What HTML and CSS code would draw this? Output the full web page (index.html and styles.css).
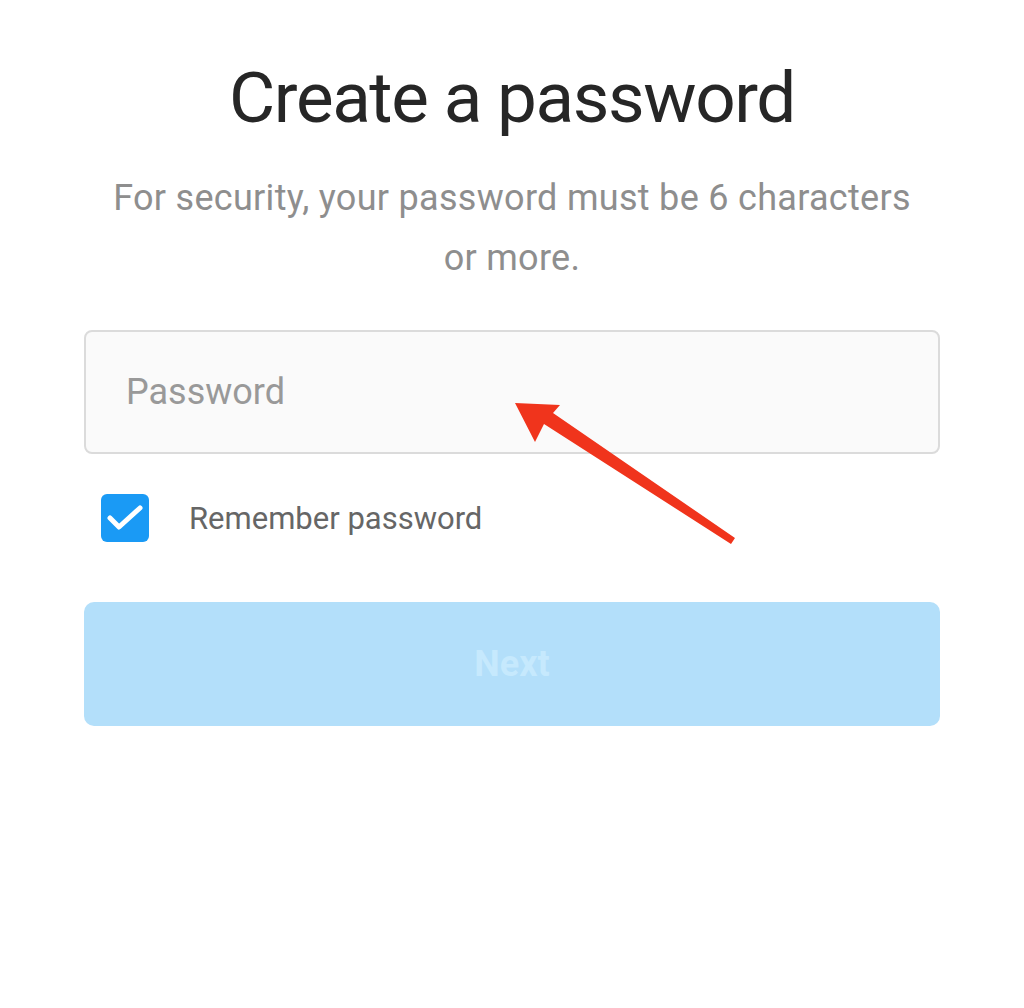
FILE: index.html
```html
<!DOCTYPE html>
<html lang="en">
<head>
    <meta charset="UTF-8">
    <meta name="viewport" content="width=device-width, initial-scale=1.0">
    <title>Create a password</title>
    <link rel="stylesheet" href="styles.css">
</head>
<body>
    <div class="container">
        <h1>Create a password</h1>
        <p class="hint">For security, your password must be 6 characters or more.</p>

        <!-- Password field with pointer arrow -->
        <div class="field-wrap">
            <input type="password" class="field" placeholder="Password">
            <svg class="arrow" width="240" height="150" viewBox="0 0 240 150">
                <polygon points="0,0 45,2 38,10 220,135 216,141 29,21 20,39" fill="#f0341c"/>
            </svg>
        </div>

        <label class="remember">
            <span class="check">
                <svg width="38" height="28" viewBox="0 0 38 28">
                    <polyline points="4,14 13,23 34,4" fill="none" stroke="#fff" stroke-width="5" stroke-linecap="round" stroke-linejoin="round"/>
                </svg>
            </span>
            Remember password
        </label>

        <button class="next" disabled>Next</button>
    </div>
</body>
</html>
```

FILE: styles.css
```css
body {
    margin: 0;
    background: #fff;
    font-family: Roboto, "Noto Sans", Arial, sans-serif;
}
.container {
    width: 856px;
    margin: 0 auto;
    padding-top: 56px;
    text-align: center;
}
h1 {
    font-size: 71px;
    font-weight: 400;
    color: #262626;
    margin: 0;
    line-height: 84px;
    letter-spacing: -1.4px;
}
.hint {
    font-size: 36px;
    color: #8e8e8e;
    line-height: 60px;
    margin: 28px 20px 0;
    letter-spacing: 0.3px;
}
.field-wrap {
    position: relative;
    margin-top: 42px;
}
.field {
    width: 100%;
    height: 124px;
    box-sizing: border-box;
    border: 2px solid #dbdbdb;
    border-radius: 8px;
    background: #fafafa;
    padding: 0 40px;
    font-family: inherit;
    font-size: 36px;
    display: block;
}
.field::placeholder {
    color: #999;
}
.arrow {
    position: absolute;
    left: 431px;
    top: 73px;
}
.remember {
    display: flex;
    align-items: center;
    gap: 40px;
    margin: 40px 0 0 17px;
    font-size: 31px;
    color: #666;
}
.check {
    width: 48px;
    height: 48px;
    border-radius: 6px;
    background: #1a9af5;
    display: flex;
    align-items: center;
    justify-content: center;
}
.next {
    width: 100%;
    height: 124px;
    margin-top: 60px;
    border: none;
    border-radius: 10px;
    background: #b3dffa;
    color: #c6e9fd;
    font-family: inherit;
    font-size: 36px;
    font-weight: 700;
    display: block;
}
```
